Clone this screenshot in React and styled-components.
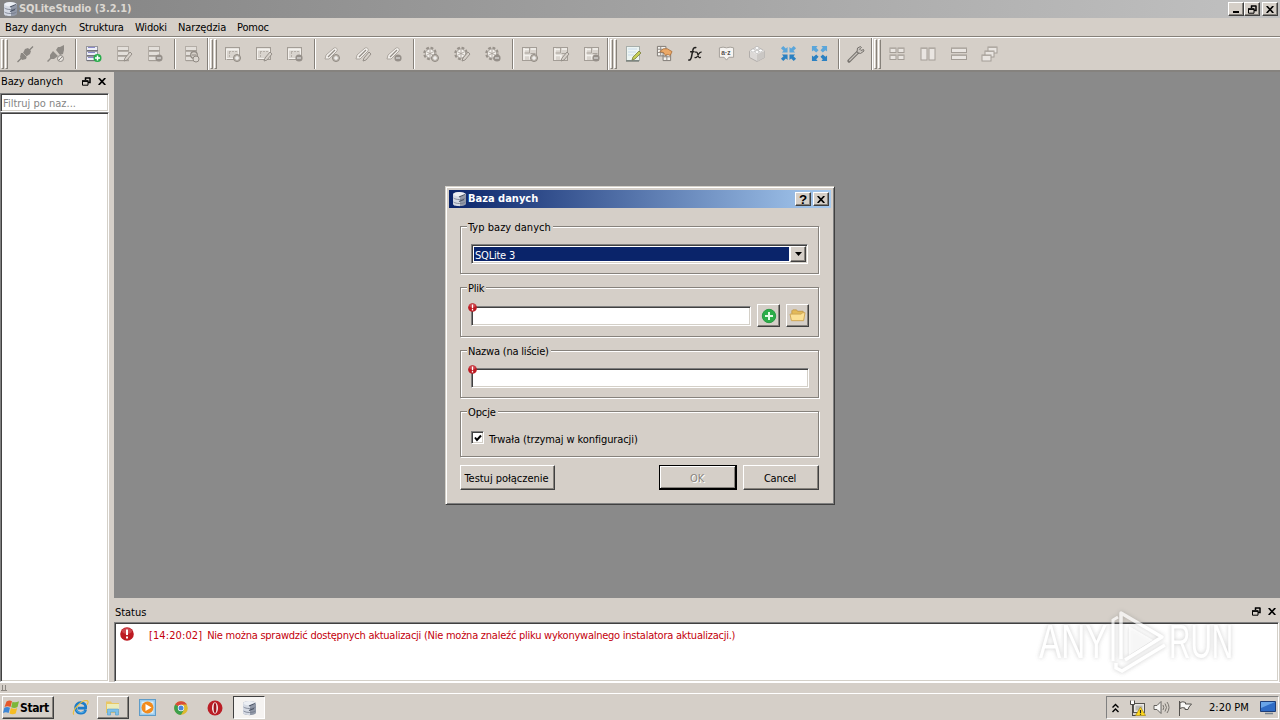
import React from 'react';
import styled, { createGlobalStyle, css } from 'styled-components';

const Global = createGlobalStyle`
  * { box-sizing: border-box; }
  html, body { margin: 0; padding: 0; overflow: hidden; }
  body { font: 11px/14px "DejaVu Sans Condensed", "DejaVu Sans", sans-serif; font-stretch: condensed; color: #000; }
  svg { display: block; flex: none; }
`;

const face = '#d5cfc8';
const raised = css`
  background: ${face};
  border: 1px solid;
  border-color: #fff #404040 #404040 #fff;
  box-shadow: inset -1px -1px 0 #86827c;
`;
const sunken = css`
  background: #fff;
  border: 1px solid;
  border-color: #808080 #fff #fff #808080;
  box-shadow: inset 1px 1px 0 #404040, inset -1px -1px 0 #d4d0c8;
`;

const Screen = styled.div`
  position: relative; width: 1280px; height: 720px; overflow: hidden;
  display: flex; flex-direction: column; background: ${face};
`;
const Text = styled.span`
  white-space: pre;
  letter-spacing: ${p => p.$ls ?? -0.22}px;
  font-weight: ${p => (p.$bold ? 700 : 400)};
  color: ${p => p.$color || 'inherit'};
`;
const TitleBar = styled.header`
  height: 18px; flex: none; display: flex; align-items: center; padding: 0 2px 0 3px; gap: 1px;
  background: linear-gradient(90deg, #828282, #c1c1c1);
`;
const Spacer = styled.div`flex: 1;`;
const CaptionButton = styled.button`
  ${raised}
  width: 16px; height: 14px; padding: 0; flex: none; display: flex; align-items: center; justify-content: center;
  margin-left: ${p => p.$gap ?? 0}px;
`;
const CaptionGroup = styled.div`display: flex;`;

const MenuBar = styled.nav`
  height: 19px; flex: none; display: flex; align-items: center; padding: 2px 0 0 5px;
  border-bottom: 1px solid #858079;
`;
const MenuItem = styled.div`width: ${p => p.$w}px; white-space: nowrap;`;

const ToolRow = styled.div`
  height: 35px; flex: none; display: flex; border-top: 1px solid #fff; border-bottom: 2px solid #85827e;
`;
const Handle = styled.div`
  width: 10px; display: flex; gap: 1px; padding: 1px 0 0 ${p => (p.$first ? 0 : 1)}px;
  border-left: 1px solid ${p => (p.$first ? face : '#fff')};
  box-shadow: ${p => (p.$first ? 'none' : '-1px 0 0 #85807a')};
`;
const Bar = styled.i`width: 3px; height: 30px; border: 1px solid; border-color: #fff #86817a #86817a #fff;`;
const ToolButton = styled.div`width: 31px; height: 31px; display: flex; align-items: center; justify-content: center; padding-right: 1px;`;
const Separator = styled.i`width: 2px; margin: 1px 1px 1px 3px; background: linear-gradient(90deg, #86817a 50%, #fff 50%);`;

const Main = styled.div`height: 610px; flex: none; display: flex;`;
const LeftDock = styled.aside`width: 114px; padding-right: 5px; display: flex; flex-direction: column;`;
const DockHead = styled.div`
  height: ${p => p.$h}px; flex: none; display: flex; align-items: center; gap: 7px; padding: ${p => p.$pad};
`;
const DockName = styled.div`padding-top: 2px; width: 62px; white-space: nowrap;`;
const Filter = styled.div`
  ${sunken} height: 19px; flex: none; padding: 3px 2px 0; color: #858585; white-space: nowrap; overflow: hidden;
`;
const Tree = styled.div`${sunken} flex: 1;`;
const Center = styled.div`flex: 1; display: flex; flex-direction: column;`;
const Mdi = styled.div`height: 526px; background: #8a8a8a;`;
const Log = styled.div`${sunken} flex: 1; margin-right: 1px; padding: 4px 5px; display: flex; gap: 15px; align-items: flex-start;`;
const LogText = styled.div`padding-top: 2px; color: #c4000c; display: flex; gap: 5px;`;
const StatusBar = styled.div`height: 11px; flex: none; border-top: 1px solid #fff; padding: 2px 1px;`;

const Taskbar = styled.footer`
  height: 27px; flex: none; border-top: 1px solid #fff; display: flex; padding: 2px 1px 1px 2px; align-items: center;
`;
const StartButton = styled.button`
  ${raised} width: 52px; height: 23px; padding: 0; display: flex; align-items: center;
  font: inherit; font-size: 12px; color: #000; overflow: hidden;
`;
const TaskItem = styled.div`
  height: 23px; width: ${p => p.$w}px; display: flex; align-items: center; justify-content: center;
  ${p => p.$kind === 'up' && raised}
  ${p => p.$kind === 'down' && css`background: #f5f3f1; border: 1px solid; border-color: #404040 #fff #fff #404040;`}
`;
const Tray = styled.div`
  width: 173px; height: 23px; border: 1px solid; border-color: #808080 #fff #fff #808080;
  display: flex; align-items: center; padding: 0 1px 0 5px;
`;
const TraySlot = styled.div`width: ${p => p.$w}px; flex: none; display: flex; white-space: nowrap;`;

const Dialog = styled.section`
  position: absolute; left: 445px; top: 186px; width: 390px; height: 319px; padding: 3px;
  background: ${face}; border: 1px solid; border-color: #d4d0c8 #404040 #404040 #d4d0c8;
  box-shadow: inset 1px 1px 0 #fff, inset -1px -1px 0 #808080;
`;
const DialogTitle = styled.div`
  height: 18px; display: flex; align-items: center; padding: 0 2px 0 3px; gap: 1px;
  background: linear-gradient(90deg, #0a246a, #a6caf0);
`;
const DialogBody = styled.div`padding: 18px 12px 0 11px; display: flex; flex-direction: column; gap: 13px;`;
const Group = styled.div`
  width: 359px; height: ${p => p.$h}px; display: flex; flex-direction: column; padding-left: 10px;
  border: 1px solid #86827c; box-shadow: 1px 1px 0 #fff, inset 1px 1px 0 #fff;
`;
const Legend = styled.div`
  align-self: flex-start; height: 14px; width: ${p => p.$w}px; margin: -7px 0 0 -4px;
  padding: 0 1px; background: ${face}; line-height: 15px; white-space: nowrap;
`;
const FieldRow = styled.div`display: flex; align-items: center; gap: 6px; margin-top: ${p => p.$mt}px;`;
const Combo = styled.div`${sunken} width: 337px; height: 20px; padding: 1px; display: flex;`;
const ComboValue = styled.div`
  flex: 1; background: #0a246a; color: #fff; padding: 2px 0 0 1px; line-height: 14px; height: 14px; margin: 1px 1px 1px 1px;
`;
const ComboArrow = styled.div`${raised} width: 16px; height: 16px; display: flex; align-items: center; justify-content: center;`;
const Input = styled.div`${sunken} position: relative; width: ${p => p.$w}px; height: 20px;`;
const Invalid = styled.div`position: absolute; left: -4px; top: -4px;`;
const IconButton = styled.div`${raised} width: 23px; height: 23px; display: flex; align-items: center; justify-content: center;`;
const CheckRow = styled.div`display: flex; gap: 5px; margin: 12px 0 0;`;
const CheckBox = styled.div`${sunken} width: 13px; height: 13px; padding: 2px;`;
const CheckLabel = styled.div`padding-top: 2px;`;
const Buttons = styled.div`display: flex; margin-top: -5px; align-items: center;`;
const Button = styled.button`
  ${raised} width: ${p => p.$w}px; height: 25px; padding: 2px 2px 0 0; font: inherit; white-space: nowrap;
  color: ${p => (p.$off ? '#8a867f' : '#000')};
  text-shadow: ${p => (p.$off ? '1px 1px 0 #fff' : 'none')};
  ${p => p.$default && css`
    margin-right: 6px; border: 1px solid #000;
    box-shadow: inset -1px -1px 0 #000, inset 1px 1px 0 #fff, inset -2px -2px 0 #86827c;
    outline: 1px solid #000; outline-offset: -1px;
  `}
`;

const Watermark = styled.div`
  position: absolute; left: 1039px; top: 608px; width: 196px; height: 66px;
  display: flex; align-items: center; filter: drop-shadow(0 0 2px rgba(110,110,110,.5)); opacity: .7;
`;
const MarkWord = styled.div`
  width: ${p => p.$w}px; font: 400 49px/64px "Liberation Sans Narrow", "Liberation Sans", sans-serif; color: #fff;
`;
const MarkScale = styled.div`transform: scaleX(${p => p.$s}); transform-origin: 0 50%; width: max-content;`;

/* ---------- icons ---------- */
const Svg = ({ w = 18, h = w, vb = `0 0 ${w} ${h}`, children }) => (
  <svg width={w} height={h} viewBox={vb} fill="none">{children}</svg>
);
const SmallSvg = ({ children }) => <Svg w={17} vb="0 0 18 18">{children}</Svg>;
const G = '#a39d96', L = '#f4f1ed';

const DbLogo = () => (
  <Svg w={15} h={16}>
    <path d="M1 3.5C1 .5 14 .5 14 3.5V12.5C14 16 1 16 1 12.5Z" fill="#9299a8" />
    <path d="M1 3.5C1 .5 9 .8 8 2V15C5 15 1 15 1 12.5Z" fill="#d5dae4" />
    <ellipse cx="7.5" cy="3.3" rx="6" ry="2.2" fill="#eceff4" />
    <path d="M1.5 7C4 9 11 9 13.5 7M1.5 11C4 13 11 13 13.5 11" stroke="#717989" strokeWidth=".8" />
    <path d="M7 6l6-2.500M7 10.500l5-2" stroke="#4b5465" strokeWidth="1.300" />
  </Svg>
);
const Badge = ({ kind, x = 13, y = 13 }) => {
  if (kind === 'plus') return <g><circle cx={x} cy={y} r="3.5" fill="#c0bab2" stroke="#8f8982" /><path d={`M${x - 2} ${y}h4M${x} ${y - 2}v4`} stroke="#fff" /></g>;
  if (kind === 'minus') return <g><circle cx={x} cy={y} r="3.6" fill="#96908a" /><path d={`M${x - 2} ${y}h4`} stroke="#eee" /></g>;
  if (kind === 'edit') return <path d={`M${x - 4} ${y + 3}l1-3 5-6 2 2-5 6z`} fill="#d7d1ca" stroke="#8f8982" strokeWidth=".9" />;
  if (kind === 'refresh') return <g><circle cx={x - 2} cy={y - 3} r="3.3" stroke="#8f8982" strokeWidth="1.2" fill="#d5cfc8" /><path d={`M${x - 4} ${y - 3}h4`} stroke="#8f8982" /><circle cx={x} cy={y + 1} r="3" stroke="#8f8982" fill="#dcd7d1" /></g>;
  return null;
};
const Plug = ({ off }) => (
  <Svg>
    {off ? (
      <g fill="#8e8a85">
        <path d="M0 16l3-3 0-3 3-4 5 5-4 3-3 0-3 3z" />
        <path d="M9 5l2-3 2 0 4-2 0 5-1 4-3 1z" />
        <circle cx="13.5" cy="13.5" r="3" fill="#e6e2dd" stroke="#8e8a85" /><path d="M11.500 15.500l4-4" stroke="#8e8a85" />
      </g>
    ) : (
      <g>
        <path d="M1.500 17L17 1.500" stroke="#85817c" strokeWidth="1.300" />
        <path d="M4 12l1-4 2 0 2-4 3-1 3 3-1 3-3 2-1 3-4 1z" fill="#8b8782" />
        <path d="M7 8l4 4" stroke="#cbc5be" strokeWidth=".7" />
      </g>
    )}
  </Svg>
);
const DbItem = ({ kind, color }) => (
  <Svg>
    {[1.5, 6.5, 11.5].map(y => (
      <g key={y}>
        <rect x="2.5" y={y} width="11" height="4" fill={color ? '#eceef6' : '#e3dfda'} stroke={color ? '#96969c' : '#b3ada6'} />
        <path d={`M3 ${y + 4.2}h11`} stroke={color ? '#6b6b72' : '#a19b94'} />
        {color && <path d={`M4 ${y + 1}h7`} stroke="#8c8acb" />}
      </g>
    ))}
    {color ? <g><circle cx="13.500" cy="13" r="4" fill="#27ad4b" /><path d="M11 13h5M13.500 10.500v5" stroke="#fff" strokeWidth="1.500" /></g> : <Badge kind={kind} />}
  </Svg>
);
const TableItem = ({ kind }) => (
  <Svg>
    <rect x="1.500" y="2.500" width="14" height="12" fill="#d9d4ce" stroke={G} />
    <rect x="2.500" y="3.500" width="12" height="2" fill={L} />
    <path d="M2.500 4v10.500" stroke={L} /><path d="M3 13.500h9M14.500 4v9" stroke={L} />
    <path d="M5 6.500h9M5.500 7v6" stroke="#b5afa8" strokeDasharray="2 1" />
    <Badge kind={kind} />
  </Svg>
);
const IndexItem = ({ kind }) => (
  <Svg>
    <path d="M2 14l1-4 8-7c2-1 4 1 3 3l-8 8z" fill={L} stroke="#aca69f" />
    <path d="M5 12l7-7" stroke="#938d86" strokeWidth="1.200" />
    <Badge kind={kind} />
  </Svg>
);
const TriggerItem = ({ kind }) => (
  <Svg>
    <circle cx="8" cy="8.500" r="5.500" stroke="#98928b" strokeWidth="2.500" strokeDasharray="2.700 1.600" />
    <circle cx="8" cy="8.500" r="4.500" fill={L} stroke={G} />
    <path d="M8 5v7M5 7l6 3M5 10l6-3" stroke={G} strokeWidth=".8" />
    <Badge kind={kind} />
  </Svg>
);
const ViewItem = ({ kind }) => (
  <Svg>
    <rect x="1.500" y="2.500" width="14" height="13" fill="#d9d4ce" stroke={G} />
    <path d="M3 4.500h5M3 3v12M10 4h5M3 10.500h6v4" stroke={L} strokeWidth="1.600" />
    <path d="M8.500 3v5h-5M9.500 8.500h5" stroke="#aaa49d" />
    <Badge kind={kind} />
  </Svg>
);
const Editor = () => (
  <Svg>
    <rect x="2.500" y="1.500" width="13" height="14" fill="#edf5f3" stroke="#a7aeab" />
    <path d="M2 16h13" stroke="#55605b" /><path d="M4 4h9M4 7h8M4 10h6" stroke="#dbe8ef" strokeWidth="2" />
    <path d="M8 15l1-3 6-6 2 2-6 6z" fill="#c5cf58" stroke="#7a7d3c" strokeWidth=".8" />
  </Svg>
);
const History = () => (
  <SmallSvg>
    <path d="M1.500 1.500h9v10h-9zM7.500 8.500h8v8h-8z" fill="#f5f3ef" stroke="#7c7772" />
    <path d="M2 4.500h8M2 8h6M5 2v9M8 12.500h7M11.500 9v7" stroke="#8a8580" />
    <path d="M4 7l4-3h4l5 3-2 4-3-1-2 1-2-3z" fill="#eba968" stroke="#a66a35" strokeWidth=".8" />
  </SmallSvg>
);
const Fx = () => (
  <Svg w={16} vb="0 0 18 18">
    <path d="M1.500 15.500c2 1 3-1 3.500-3L6.500 5c.5-3 2-4 4-3M3.500 6.500h5" stroke="#22201e" strokeWidth="1.700" />
    <path d="M9 7c2-.5 2.500 0 3 2l1 3c.5 1.500 1 1.500 2.500.5M16.500 7c-1-.5-2 0-3.500 2.200L11.500 12c-1 1.300-2 1.300-3 .8" stroke="#22201e" strokeWidth="1.400" />
  </Svg>
);
const AzText = styled.text`font: bold 7px "Liberation Sans", sans-serif; fill: #55524e;`;
const Collation = () => (
  <SmallSvg>
    <path d="M1.500 3q4-1.500 7.500 0q4-1.500 7.500 0v10h-5l-2.500 3-2.500-3h-5z" fill="#f6f4f1" stroke="#a29d97" />
    <AzText x="3.500" y="10.500">a·z</AzText>
  </SmallSvg>
);
const Extension = () => (
  <Svg>
    <path d="M1.500 6L9 2l7.500 4v6.500l-7.500 4-7.500-4z" fill="#dcd9d7" stroke="#b1adaa" />
    <path d="M1.500 6L9 9.500 16.500 6 9 2z" fill="#f1efed" /><path d="M9 9.500V16.500l7.500-4V6z" fill="#cac7c4" />
    <ellipse cx="5" cy="5.500" rx="2" ry="1.500" fill="#fff" stroke="#aaa" strokeWidth=".6" />
    <ellipse cx="12.500" cy="5.500" rx="2" ry="1.500" fill="#fff" stroke="#aaa" strokeWidth=".6" />
    <ellipse cx="9" cy="3" rx="2" ry="1.500" fill="#fff" stroke="#aaa" strokeWidth=".6" />
    <ellipse cx="9" cy="7" rx="2" ry="1.500" fill="#fff" stroke="#aaa" strokeWidth=".6" />
  </Svg>
);
const Arrows = ({ out }) => (
  <SmallSvg>
    {[0, 90, 180, 270].map(a => (
      <g key={a} transform={`rotate(${a} 9 9)`}>
        {out
          ? <path d="M1 1h6L5.500 2.800 8 5.500 5.500 8 2.800 5.500 1 7z" fill={a === 90 || a === 0 ? '#5ba6da' : '#2b81c2'} />
          : <path d="M8 8H2l1.700-1.800L1 3.500 3.500 1l2.700 2.700L8 2z" fill={a === 90 || a === 0 ? '#5ba6da' : '#2b81c2'} />}
      </g>
    ))}
  </SmallSvg>
);
const Wrench = () => (
  <Svg>
    <path d="M2 16L11 7" stroke="#77736e" strokeWidth="3.200" strokeLinecap="round" />
    <path d="M2.200 15.700L11 7" stroke="#c9c4be" strokeWidth="1.200" />
    <path d="M13.500 1.500l-3 1.500-.5 4.500 3.500 1 3.500-2.500-.5-1.500-2.500 1-1.500-1.500 2-1.500z" fill="#c9c4be" stroke="#77736e" />
  </Svg>
);
const Tiles = ({ kind }) => {
  const rects = {
    grid: [[2, 3, 6, 4.500], [10, 3, 6, 4.500], [2, 10, 6, 4.500], [10, 10, 6, 4.500]],
    cols: [[2, 3, 6, 12], [10, 3, 6, 12]],
    rows: [[1.500, 3, 15, 4.500], [1.500, 10, 15, 4.500]],
    cascade: [[7, 2, 9, 6], [4, 6, 9, 6], [1, 10, 9, 6]],
  }[kind];
  return (
    <Svg>
      {rects.map(([x, y, w, h]) => (
        <g key={`${x}-${y}`}>
          <rect x={x} y={y} width={w} height={h} fill="#e9e5e1" stroke={G} />
          <path d={`M${x} ${y + 0.500}h${w}`} stroke="#b0aaa3" />
        </g>
      ))}
    </Svg>
  );
};
const CloseX = ({ s = 8 }) => <Svg w={s} h={7} vb="0 0 8 7"><path d="M.7 0l6.600 7M7.300 0L.7 7" stroke="#000" strokeWidth="1.700" /></Svg>;
const Restore = () => (
  <Svg w={9}><path d="M3 1h5.500M3.500 .5V3M8 1v4.500H6" stroke="#000" strokeWidth="1.500" /><path d="M.5 4.200h5.500v4H.5z" stroke="#000" /><path d="M0 4h6.500" stroke="#000" strokeWidth="1.600" /></Svg>
);
const ErrorDot = ({ s }) => (
  <Svg w={s} vb="0 0 14 14">
    <circle cx="7" cy="7" r="6.800" fill="#bd1a22" /><ellipse cx="7" cy="4" rx="5" ry="3" fill="#d9636a" opacity=".6" />
    <path d="M7 2.500V8M7 9.500v2" stroke="#fff" strokeWidth="2" />
  </Svg>
);
const AddDot = () => (
  <Svg w={16}><circle cx="8" cy="8" r="6.700" fill="#2cae49" stroke="#2a9a44" /><path d="M4 8h8M8 4v8" stroke="#e4fbe6" strokeWidth="2" /></Svg>
);
const Folder = () => (
  <Svg w={17} h={15} vb="0 0 18 16">
    <path d="M3 13V3l1-1h4l1 1.500h6V13z" fill="#e3ba59" stroke="#c39a48" />
    <path d="M1 6.500h12l1.500-1.500H17l-1.500 8.500h-13z" fill="#fbe095" stroke="#cfa656" />
  </Svg>
);
const WinFlag = () => (
  <Svg w={17}>
    <path d="M3.500 2.500q3-2 5.500-.3L7.500 8Q4.500 6.500 1.500 8z" fill="#e5582b" />
    <path d="M9.500 2.700q3 1.500 6.500-.5L14.500 8q-3 1.700-6.300.3z" fill="#7db73a" />
    <path d="M1.300 8.700q2.800-1.500 5.700 0L5.600 14Q3 12.500 0 14z" fill="#3d86d5" />
    <path d="M7.900 9.100q3 1.500 6.300-.2L12.700 14.500Q9.500 16 6.500 14.500z" fill="#f6bd24" />
  </Svg>
);
const Ie = () => (
  <Svg w={17} vb="0 0 18 18">
    <path d="M14.500 11.500C13 16 6 16.500 4.200 11.500 2.500 6 7 3.500 10 4c3.500.6 4.800 3 4.500 5.700H6" stroke="#1c7cc9" strokeWidth="2.800" />
    <path d="M13.500 12.500C12 15 6.500 15.500 4.700 11.500" stroke="#58b5ec" strokeWidth="1" />
    <path d="M2 16.500C-1 13 11-.5 16.500 2c1 .6.500 2.500-.5 4" stroke="#eabf3c" strokeWidth="1.200" />
  </Svg>
);
const Explorer = () => (
  <Svg w={18}>
    <path d="M2 14V2.500h5L8 4h7v10z" fill="#e9c765" /><path d="M3 5h12v7H3z" fill="#fff2b5" />
    <path d="M3 6h12M3 8h12" stroke="#d8e8c0" />
    <path d="M3.500 16v-6h11v6h-3v-3h-5v3z" fill="#7dc0ea" stroke="#5ba4d0" strokeWidth=".7" />
  </Svg>
);
const Wmp = () => (
  <Svg w={17}><rect x=".5" y=".5" width="16" height="16" fill="#9bcbed" stroke="#5f9cc8" /><rect x="2.500" y="2.500" width="12" height="12" fill="#d9edf8" /><circle cx="8.500" cy="8.500" r="6" fill="#f28b1d" /><path d="M6.500 5l6 3.500-6 3.500z" fill="#fff" /></Svg>
);
const Chrome = () => (
  <Svg w={14}>
    <circle cx="7" cy="7" r="6.800" fill="#ddb92f" />
    <path d="M7 7L1.100 3.600A6.800 6.800 0 0 1 12.900 3.600H7z" fill="#d94a3a" />
    <path d="M7 7L1.100 3.600A6.800 6.800 0 0 0 7 13.800L10 8.700z" fill="#3d9f4b" />
    <circle cx="7" cy="7" r="3.200" fill="#fff" /><circle cx="7" cy="7" r="2.500" fill="#4a86d8" />
  </Svg>
);
const Opera = () => (
  <Svg w={16}><circle cx="8" cy="8" r="7.500" fill="#bb1e26" /><ellipse cx="8" cy="8" rx="3" ry="5.800" fill="#f8ecec" /><ellipse cx="8" cy="8" rx="1.400" ry="5" fill="#a0141c" /></Svg>
);
const Network = () => (
  <Svg w={17} h={16}>
    <rect x="4.500" y="3.500" width="11" height="9" fill="#e9e8e4" stroke="#55534f" /><rect x="6.500" y="5.500" width="7" height="5" fill="#b9b8b4" />
    <path d="M1.500 .5v4h4v-4M3.500 5v10M3 15.500h4" stroke="#4a4845" /><path d="M2 1h3v3H2z" fill="#fff" />
    <path d="M11.500 7L16.500 15.500h-10z" fill="#ffd81c" stroke="#a58612" strokeWidth=".7" /><path d="M11.500 10v3M11.500 13.800v1" stroke="#222" strokeWidth="1.200" />
  </Svg>
);
const Sound = () => (
  <Svg w={17} h={15}>
    <path d="M1 5.500h3L8 1.500v12L4 9.500H1z" fill="#f7f6f4" stroke="#65625e" />
    <path d="M10 5q1.500 2.500 0 5M12 3.500q3 4 0 8M14 2q4 5.500 0 11" stroke="#77736e" />
  </Svg>
);
const Flag = () => (
  <Svg w={17} h={16}><path d="M2.500 1v15M3 2.500q3-1.500 5.500 0v1.500h6l-2.500 3-1 2.500H8V8Q5 7 3 8.500z" stroke="#55524e" fill="#f8f7f5" /></Svg>
);
const Monitor = () => (
  <Svg w={16} h={15}><path d="M.5 1.500h15v10H.5z" fill="#2f6cc5" stroke="#1e3d76" /><path d="M1 2h14L1 8z" fill="#69a5e8" /><path d="M5 13.500h8" stroke="#76828f" strokeWidth="1.500" /></Svg>
);
const PlayMark = () => (
  <Svg w={60} h={66}>
    <path d="M4 53V12l5-3" stroke="#fff" strokeWidth="3" />
    <path d="M12 51V5L53 29 16 52" stroke="#fff" strokeWidth="3.500" strokeLinejoin="round" />
    <path d="M20 18v29l24-15z" fill="#fff" fillOpacity=".8" />
    <path d="M7 55v5l6 3L56 37" stroke="#fff" strokeWidth="3.500" />
  </Svg>
);

const toolbars = [
  [[<Plug />, <Plug off />], [<DbItem color />, <DbItem kind="edit" />, <DbItem kind="minus" />], [<DbItem kind="refresh" />]],
  [TableItem, IndexItem, TriggerItem, ViewItem].map(I => ['plus', 'edit', 'minus'].map(k => <I kind={k} />)),
  [[<Editor />, <History />, <Fx />, <Collation />, <Extension />, <Arrows />, <Arrows out />], [<Wrench />]],
  [['grid', 'cols', 'rows', 'cascade'].map(k => <Tiles kind={k} />)],
];
const menus = [['Bazy danych', 74, -0.15], ['Struktura', 56, -0.2], ['Widoki', 43, -0.2], ['Narzędzia', 59, -0.1], ['Pomoc', 40, -0.2]];

function Toolbars() {
  return (
    <ToolRow>
      {toolbars.map((groups, b) => (
        <React.Fragment key={b}>
          <Handle $first={b === 0}><Bar /><Bar /></Handle>
          {groups.map((icons, g) => (
            <React.Fragment key={g}>
              {g > 0 && <Separator />}
              {icons.map((icon, i) => <ToolButton key={i}>{icon}</ToolButton>)}
            </React.Fragment>
          ))}
        </React.Fragment>
      ))}
    </ToolRow>
  );
}

function DatabaseDialog() {
  return (
    <Dialog>
      <DialogTitle>
        <DbLogo />
        <Text $bold $ls={0} $color="#fff">Baza danych</Text>
        <Spacer />
        <CaptionGroup>
          <CaptionButton><Text $bold>?</Text></CaptionButton>
          <CaptionButton $gap={2}><CloseX /></CaptionButton>
        </CaptionGroup>
      </DialogTitle>
      <DialogBody>
        <Group $h={48}>
          <Legend $w={86}><Text $ls={0.03}>Typ bazy danych</Text></Legend>
          <FieldRow $mt={10}>
            <Combo>
              <ComboValue><Text>SQLite 3</Text></ComboValue>
              <ComboArrow><Svg w={7} h={4}><path d="M0 0h7L3.500 4z" fill="#000" /></Svg></ComboArrow>
            </Combo>
          </FieldRow>
        </Group>
        <Group $h={50}>
          <Legend $w={19}><Text>Plik</Text></Legend>
          <FieldRow $mt={9}>
            <Input $w={280}><Invalid><ErrorDot s={9} /></Invalid></Input>
            <IconButton><AddDot /></IconButton>
            <IconButton><Folder /></IconButton>
          </FieldRow>
        </Group>
        <Group $h={48}>
          <Legend $w={84}><Text $ls={-0.2}>Nazwa (na liście)</Text></Legend>
          <FieldRow $mt={10}>
            <Input $w={338}><Invalid><ErrorDot s={9} /></Invalid></Input>
          </FieldRow>
        </Group>
        <Group $h={46}>
          <Legend $w={31}><Text $ls={-0.1}>Opcje</Text></Legend>
          <CheckRow>
            <CheckBox><Svg w={8} h={8}><path d="M1 3.500l2 2.500L7 1.500" stroke="#000" strokeWidth="2" /></Svg></CheckBox>
            <CheckLabel><Text $ls={-0.1}>Trwała (trzymaj w konfiguracji)</Text></CheckLabel>
          </CheckRow>
        </Group>
        <Buttons>
          <Button $w={95}><Text $ls={-0.02}>Testuj połączenie</Text></Button>
          <Spacer />
          <Button $w={78} $default $off><Text>OK</Text></Button>
          <Button $w={76}><Text>Cancel</Text></Button>
        </Buttons>
      </DialogBody>
    </Dialog>
  );
}

export default function App() {
  return (
    <Screen>
      <Global />
      <TitleBar>
        <DbLogo />
        <Text $bold $ls={-0.05} $color="#dcd8d2">SQLiteStudio (3.2.1)</Text>
        <Spacer />
        <CaptionGroup>
          <CaptionButton><Svg w={8} h={8}><path d="M1 7h6" stroke="#000" strokeWidth="2" /></Svg></CaptionButton>
          <CaptionButton><Restore /></CaptionButton>
          <CaptionButton $gap={2}><CloseX /></CaptionButton>
        </CaptionGroup>
      </TitleBar>
      <MenuBar>
        {menus.map(([label, w, ls]) => <MenuItem key={label} $w={w}><Text $ls={ls}>{label}</Text></MenuItem>)}
      </MenuBar>
      <Toolbars />
      <Main>
        <LeftDock>
          <DockHead $h={21} $pad="0 3px 3px 1px">
            <DockName><Text $ls={-0.12}>Bazy danych</Text></DockName><Spacer /><Restore /><CloseX />
          </DockHead>
          <Filter><Text $ls={0}>Filtruj po naz...</Text></Filter>
          <Tree />
        </LeftDock>
        <Center>
          <Mdi />
          <DockHead $h={24} $pad="3px 4px 0 1px">
            <DockName><Text $ls={-0.05}>Status</Text></DockName><Spacer /><Restore /><CloseX />
          </DockHead>
          <Log>
            <ErrorDot s={14} />
            <LogText>
              <Text $ls={0.1}>[14:20:02]</Text>
              <Text $ls={-0.25}>Nie można sprawdzić dostępnych aktualizacji (Nie można znaleźć pliku wykonywalnego instalatora aktualizacji.)</Text>
            </LogText>
          </Log>
        </Center>
      </Main>
      <StatusBar><Svg w={7} h={6}><path d="M1.500 0v5.500M4.500 0v5.500M0 5.500h6" stroke="#8c8781" /></Svg></StatusBar>
      <Taskbar>
        <StartButton><WinFlag /><Text $bold $ls={-0.4}>Start</Text></StartButton>
        <TaskItem $w={9} />
        <TaskItem $w={34}><Ie /></TaskItem>
        <TaskItem $w={32} $kind="up"><Explorer /></TaskItem>
        <TaskItem $w={36}><Wmp /></TaskItem>
        <TaskItem $w={32}><Chrome /></TaskItem>
        <TaskItem $w={36}><Opera /></TaskItem>
        <TaskItem $w={32} $kind="down"><DbLogo /></TaskItem>
        <Spacer />
        <Tray>
          <TraySlot $w={17}><Svg w={7} h={10}><path d="M.5 4.500l3-3 3 3M.5 9l3-3 3 3" stroke="#000" strokeWidth="1.400" /></Svg></TraySlot>
          <TraySlot $w={24}><Network /></TraySlot>
          <TraySlot $w={24}><Sound /></TraySlot>
          <TraySlot $w={32}><Flag /></TraySlot>
          <TraySlot $w={51}><Text $ls={0}>2:20 PM</Text></TraySlot>
          <Monitor />
        </Tray>
      </Taskbar>
      <DatabaseDialog />
      <Watermark>
        <MarkWord $w={70}><MarkScale $s={0.68}>ANY</MarkScale></MarkWord>
        <PlayMark />
        <MarkWord $w={64}><MarkScale $s={0.605}>RUN</MarkScale></MarkWord>
      </Watermark>
    </Screen>
  );
}
